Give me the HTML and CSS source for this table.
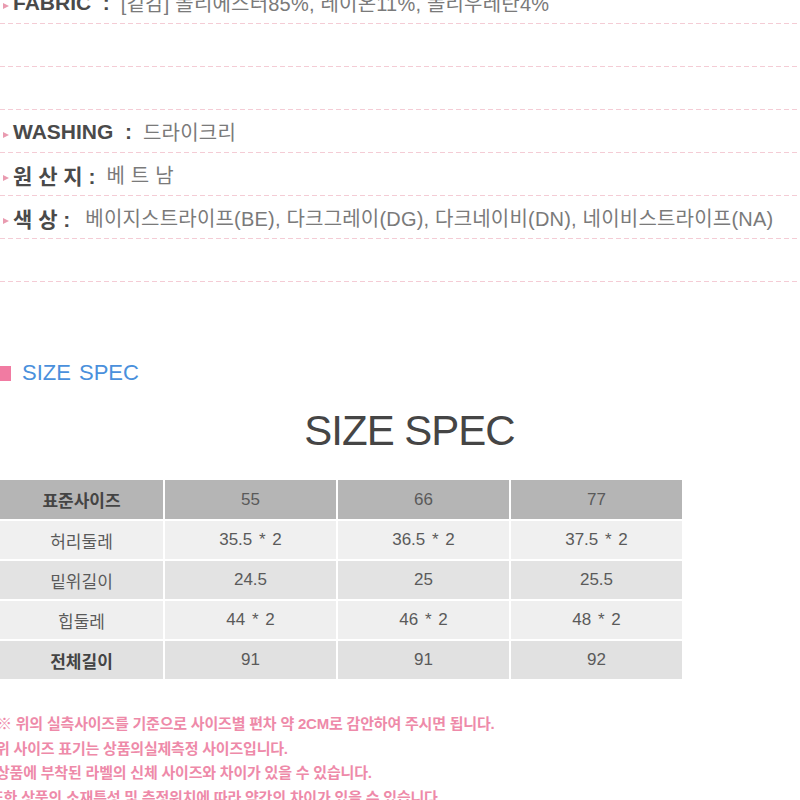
FILE: index.html
```html
<!DOCTYPE html>
<html lang="ko">
<head>
<meta charset="utf-8">
<title>SIZE SPEC</title>
<link rel="stylesheet" href="styles.css">
</head>
<body>
<div class="page">
  <div class="specs">
    <div class="row"><span class="arrow"></span><span class="label">FABRIC &nbsp;:</span><span class="value">[겉감] 폴리에스터85%, 레이온11%, 폴리우레탄4%</span></div>
    <div class="row"></div>
    <div class="row"></div>
    <div class="row"><span class="arrow"></span><span class="label">WASHING &nbsp;:</span><span class="value">드라이크리</span></div>
    <div class="row"><span class="arrow"></span><span class="label">원 산 지 :</span><span class="value">베 트 남</span></div>
    <div class="row"><span class="arrow"></span><span class="label">색 상 :</span><span class="value wide">베이지스트라이프(BE), 다크그레이(DG), 다크네이비(DN), 네이비스트라이프(NA)</span></div>
    <div class="row"></div>
  </div>

  <div class="section-title"><span class="square"></span><span class="section-text">SIZE SPEC</span></div>

  <div class="big-title">SIZE SPEC</div>

  <div class="size-table">
    <div class="cell head bold">표준사이즈</div>
    <div class="cell head">55</div>
    <div class="cell head">66</div>
    <div class="cell head">77</div>

    <div class="cell r1">허리둘레</div>
    <div class="cell r1">35.5 * 2</div>
    <div class="cell r1">36.5 * 2</div>
    <div class="cell r1">37.5 * 2</div>

    <div class="cell r2">밑위길이</div>
    <div class="cell r2">24.5</div>
    <div class="cell r2">25</div>
    <div class="cell r2">25.5</div>

    <div class="cell r3">힙둘레</div>
    <div class="cell r3">44 * 2</div>
    <div class="cell r3">46 * 2</div>
    <div class="cell r3">48 * 2</div>

    <div class="cell r4 bold">전체길이</div>
    <div class="cell r4">91</div>
    <div class="cell r4">91</div>
    <div class="cell r4">92</div>
  </div>

  <div class="notes">
    <p class="note first">※ 위의 실측사이즈를 기준으로 사이즈별 편차 약 2CM로 감안하여 주시면 됩니다.</p>
    <p class="note cut">위 사이즈 표기는 상품의실제측정 사이즈입니다.</p>
    <p class="note cut">상품에 부착된 라벨의 신체 사이즈와 차이가 있을 수 있습니다.</p>
    <p class="note cut2">또한 상품의 소재특성 및 측정위치에 따라 약간의 차이가 있을 수 있습니다.</p>
  </div>
</div>
</body>
</html>
```

FILE: styles.css
```css
html, body {
  margin: 0;
  padding: 0;
  background: #ffffff;
}

body {
  width: 800px;
  height: 800px;
  overflow: hidden;
  font-family: "Liberation Sans", "Noto Sans CJK KR", sans-serif;
}

.page {
  width: 800px;
}

.specs {
  margin-top: -19px;
}

.row {
  height: 43px;
  box-sizing: border-box;
  display: flex;
  align-items: center;
  background-image: repeating-linear-gradient(to right, #f4ccd5 0 5px, transparent 5px 8px);
  background-size: 100% 1px;
  background-position: left bottom;
  background-repeat: no-repeat;
  white-space: nowrap;
}

.arrow {
  width: 0;
  height: 0;
  border-left: 6px solid #e99bb0;
  border-top: 3.5px solid transparent;
  border-bottom: 3.5px solid transparent;
  margin-left: 3px;
  margin-right: 4px;
  margin-top: 6px;
}

.label {
  font-size: 21px;
  font-weight: bold;
  color: #4a4a4a;
  margin-right: 11px;
}

.value {
  font-size: 20px;
  color: #7a7a7a;
  letter-spacing: 0.2px;
}

.value.wide {
  margin-left: 4px;
}

.section-title {
  margin-top: 78px;
  height: 26px;
  display: flex;
  align-items: center;
  gap: 11px;
}

.square {
  width: 11px;
  height: 15px;
  background: #f17ba2;
}

.section-text {
  font-size: 22px;
  color: #4a90dc;
  word-spacing: 2px;
}

.big-title {
  margin-top: 21px;
  height: 48px;
  line-height: 48px;
  font-size: 42px;
  color: #454545;
  letter-spacing: -1px;
  text-align: center;
  padding-left: 19px;
}

.size-table {
  margin-top: 25px;
  display: grid;
  grid-template-columns: 163px 171px 171px 171px;
  grid-template-rows: 39px repeat(4, 38px);
  gap: 2px;
  width: 682px;
}

.cell {
  display: flex;
  align-items: center;
  justify-content: center;
  font-size: 17px;
  color: #5a5a5a;
  word-spacing: 2px;
}

.cell.bold {
  font-weight: bold;
  color: #444444;
}

.head { background: #b5b5b5; }
.r1 { background: #f0f0f0; }
.r2 { background: #e3e3e3; }
.r3 { background: #efefef; }
.r4 { background: #e1e1e1; }

.notes {
  margin-top: 33px;
}

.note {
  margin: 0;
  height: 24.5px;
  line-height: 24.5px;
  font-size: 15px;
  font-weight: bold;
  color: #ee8aa9;
  letter-spacing: -0.2px;
  white-space: nowrap;
}

.note.first {
  margin-left: -3px;
}

.note.cut {
  margin-left: -4px;
}

.note.cut2 {
  margin-left: -10px;
}
```
